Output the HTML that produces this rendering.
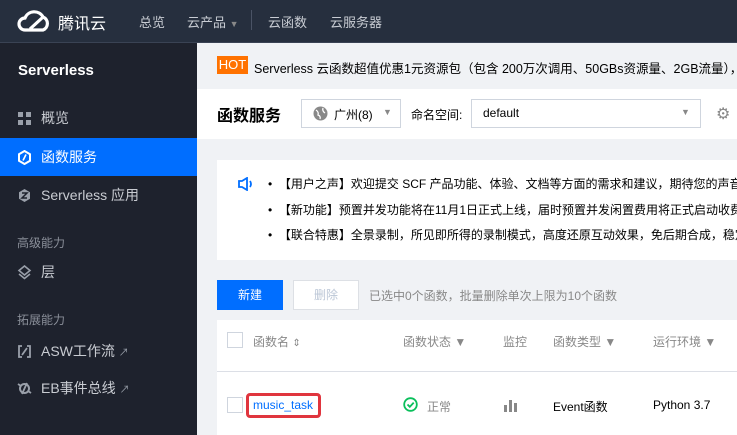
<!DOCTYPE html>
<html><head><meta charset="utf-8"><style>
*{margin:0;padding:0;box-sizing:border-box}
body{width:737px;height:435px;overflow:hidden;font-family:"Liberation Sans","Noto Sans CJK SC",sans-serif;font-size:12px;background:#f0f2f5;position:relative}
.abs{position:absolute}
.top{left:0;top:0;width:737px;height:43px;background:#262f3e;border-bottom:1px solid #3a4354}
.top span{position:absolute;top:12px;color:#c8ccd3;font-size:13px}
.side{left:0;top:43px;width:197px;height:392px;background:#1e222d}
.side .it{position:absolute;left:0;width:197px;height:38px;line-height:38px;color:#c9ccd2;font-size:14px;padding-left:41px}
.side .cat{position:absolute;left:17px;color:#8a8f99;font-size:12px}
.ic{position:absolute;left:17px;top:12px;width:15px;height:15px}
.white{background:#fff}
</style></head><body>
<div class="abs top">
  <svg class="abs" style="left:16px;top:9px" width="36" height="24" viewBox="0 0 36 24"><path d="M9 21 H27 A7 7 0 0 0 27 8 A10 10 0 0 0 9 9 A6 6 0 0 0 9 21 Z M14 20 L26 9" fill="none" stroke="#fff" stroke-width="3.2"/></svg>
  <span style="left:58px;top:10px;color:#fff;font-size:16px">腾讯云</span>
  <span style="left:139px">总览</span>
  <span style="left:187px">云产品 <span style="position:static;font-size:9px;color:#888">▼</span></span>
  <div class="abs" style="left:251px;top:10px;width:1px;height:20px;background:#4a5365"></div>
  <span style="left:268px">云函数</span>
  <span style="left:330px">云服务器</span>
</div>
<div class="abs side">
  <div class="abs" style="left:18px;top:19px;color:#fff;font-size:15px;font-weight:bold">Serverless</div>
  <div class="it" style="top:56px"><svg class="ic" viewBox="0 0 15 15"><g fill="#9aa0aa"><rect x="1" y="1" width="5" height="5"/><rect x="9" y="1" width="5" height="5"/><rect x="1" y="9" width="5" height="5"/><rect x="9" y="9" width="5" height="5"/></g></svg>概览</div>
  <div class="it" style="top:95px;background:#006eff;color:#fff"><svg class="ic" viewBox="0 0 15 15"><path d="M7.5 1 L13 4.2 V10.8 L7.5 14 L2 10.8 V4.2Z" fill="none" stroke="#fff" stroke-width="2"/><path d="M9 4.5 L6 10.5" stroke="#fff" stroke-width="1.6"/></svg>函数服务</div>
  <div class="it" style="top:133px"><svg class="ic" viewBox="0 0 15 15"><path d="M7.5 1 L13 4.2 V10.8 L7.5 14 L2 10.8 V4.2Z" fill="#9aa0aa"/><path d="M5 5 H10 L5 10 H10" stroke="#1e222d" stroke-width="1.5" fill="none"/></svg>Serverless 应用</div>
  <div class="cat" style="top:191px">高级能力</div>
  <div class="it" style="top:210px"><svg class="ic" viewBox="0 0 15 15"><path d="M7.5 1 L13 5.5 L7.5 10 L2 5.5Z M2 9 L7.5 13.5 L13 9" fill="none" stroke="#9aa0aa" stroke-width="1.6"/></svg>层</div>
  <div class="cat" style="top:268px">拓展能力</div>
  <div class="it" style="top:289px"><svg class="ic" viewBox="0 0 15 15"><path d="M5 2 H2 V13 H5 M10 2 H13 V13 H10 M5 11 L10 4" fill="none" stroke="#9aa0aa" stroke-width="1.8"/></svg>ASW工作流 <span style="font-size:10px;color:#9aa0aa">↗</span></div>
  <div class="it" style="top:326px"><svg class="ic" viewBox="0 0 15 15"><circle cx="7.5" cy="7.5" r="4.5" fill="none" stroke="#9aa0aa" stroke-width="2"/><path d="M1 3 L4 5 M14 12 L11 10 M5 13 L10 2" stroke="#9aa0aa" stroke-width="1.8"/></svg>EB事件总线 <span style="font-size:10px;color:#9aa0aa">↗</span></div>
</div>
<div class="abs" style="left:217px;top:56px;width:31px;height:18px;background:#ff7200;color:#fff;font-size:13px;text-align:center;line-height:18px">HOT</div>
<div class="abs" style="left:254px;top:58px;font-size:12.5px;color:#000;white-space:nowrap">Serverless 云函数超值优惠1元资源包（包含 200万次调用、50GBs资源量、2GB流量），每</div>
<div class="abs white" style="left:197px;top:89px;width:540px;height:50px"></div>
<div class="abs" style="left:217px;top:102px;font-size:16px;font-weight:bold;color:#000">函数服务</div>
<div class="abs" style="left:301px;top:99px;width:100px;height:29px;border:1px solid #cfd5de;background:#fff">
  <svg class="abs" style="left:11px;top:6px" width="15" height="15" viewBox="0 0 15 15"><circle cx="7.5" cy="7.5" r="7" fill="#888"/><path d="M3 4 Q6 6 5 9 Q8 10 7 13 M10 2 Q9 5 12 7" stroke="#fff" stroke-width="1.3" fill="none"/></svg>
  <span class="abs" style="left:32px;top:6px;color:#000">广州(8)</span>
  <span class="abs" style="left:81px;top:7px;font-size:9px;color:#888">▼</span>
</div>
<div class="abs" style="left:411px;top:106px;color:#000">命名空间:</div>
<div class="abs" style="left:471px;top:99px;width:230px;height:29px;border:1px solid #cfd5de;background:#fff">
  <span class="abs" style="left:11px;top:6px;color:#000">default</span>
  <span class="abs" style="left:209px;top:7px;font-size:9px;color:#888">▼</span>
</div>
<div class="abs" style="left:716px;top:104px;font-size:16px;color:#888">⚙</div>
<div class="abs white" style="left:217px;top:160px;width:520px;height:100px"></div>
<svg class="abs" style="left:238px;top:177px" width="16" height="14" viewBox="0 0 16 14"><path d="M1 4 H4 L9 1 V13 L4 10 H1Z" fill="none" stroke="#006eff" stroke-width="1.8"/><path d="M12 4 Q14 7 12 10" fill="none" stroke="#006eff" stroke-width="1.8"/></svg>
<div class="abs" style="left:268px;top:172px;color:#000;white-space:nowrap;line-height:25.5px">
•&nbsp; 【用户之声】欢迎提交 SCF 产品功能、体验、文档等方面的需求和建议，期待您的声音<br>
•&nbsp; 【新功能】预置并发功能将在11月1日正式上线，届时预置并发闲置费用将正式启动收费<br>
•&nbsp; 【联合特惠】全景录制，所见即所得的录制模式，高度还原互动效果，免后期合成，稳定</div>
<div class="abs" style="left:217px;top:280px;width:66px;height:30px;background:#006eff;color:#fff;text-align:center;line-height:30px">新建</div>
<div class="abs" style="left:293px;top:280px;width:66px;height:30px;border:1px solid #dde0e5;background:#fff;color:#bbc6d6;text-align:center;line-height:28px">删除</div>
<div class="abs" style="left:369px;top:287px;color:#888">已选中0个函数，批量删除单次上限为10个函数</div>
<div class="abs white" style="left:217px;top:320px;width:520px;height:115px"></div>
<div class="abs" style="left:217px;top:371px;width:520px;height:1px;background:#dcdfe6"></div>
<div class="abs" style="left:227px;top:332px;width:16px;height:16px;border:1px solid #cfd5de;background:#fff"></div>
<div class="abs" style="left:253px;top:333px;color:#888">函数名 <span style="font-size:10px">⇕</span></div>
<div class="abs" style="left:403px;top:333px;color:#888">函数状态 ▼</div>
<div class="abs" style="left:503px;top:333px;color:#888">监控</div>
<div class="abs" style="left:553px;top:333px;color:#888">函数类型 ▼</div>
<div class="abs" style="left:653px;top:333px;color:#888">运行环境 ▼</div>
<div class="abs" style="left:227px;top:397px;width:16px;height:16px;border:1px solid #cfd5de;background:#fff"></div>
<div class="abs" style="left:246px;top:393px;width:75px;height:25px;border:3px solid #e0353e;border-radius:4px"></div>
<div class="abs" style="left:253px;top:398px;color:#006eff">music_task</div>
<svg class="abs" style="left:403px;top:397px" width="15" height="15" viewBox="0 0 15 15"><circle cx="7.5" cy="7.5" r="6.3" fill="none" stroke="#0abf5b" stroke-width="1.8"/><path d="M4.5 7.5 L6.8 9.8 L10.7 5.6" fill="none" stroke="#0abf5b" stroke-width="1.8"/></svg>
<div class="abs" style="left:427px;top:398px;color:#888">正常</div>
<svg class="abs" style="left:504px;top:398px" width="14" height="14" viewBox="0 0 14 14"><g fill="#888"><rect x="0" y="7" width="3" height="7"/><rect x="5" y="2" width="3" height="12"/><rect x="10" y="5" width="3" height="9"/></g></svg>
<div class="abs" style="left:553px;top:398px;color:#000">Event函数</div>
<div class="abs" style="left:653px;top:398px;color:#000">Python 3.7</div>
</body></html>
